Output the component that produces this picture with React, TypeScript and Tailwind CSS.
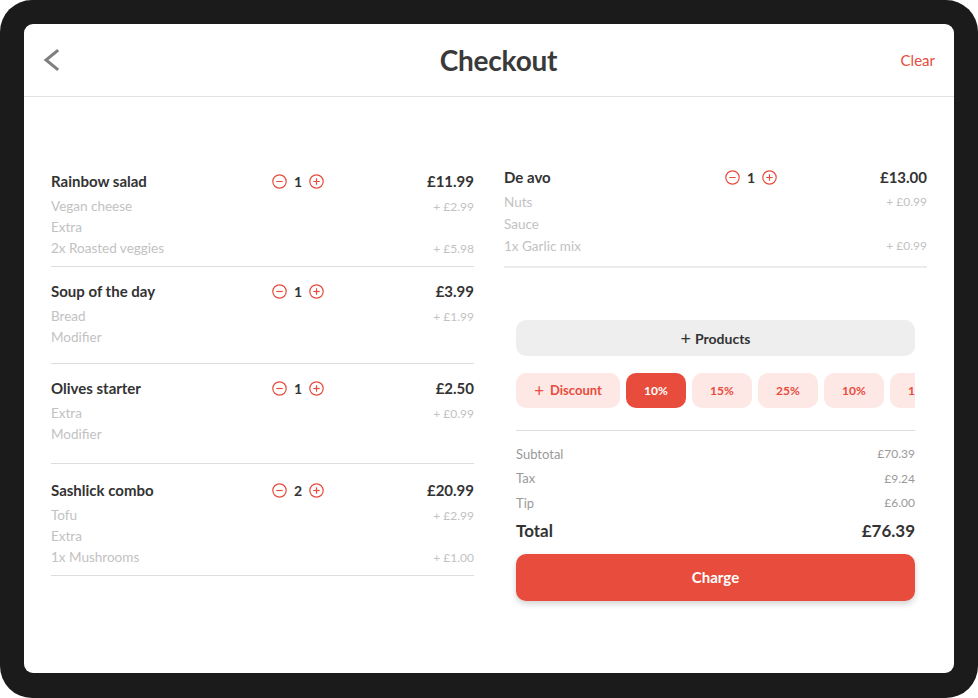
import React from 'react'

interface Modifier { label: string; price?: string }
interface Item { name: string; qty: number; price: string; mods: Modifier[]; pad: string }

const leftItems: Item[] = [
  { name: 'Rainbow salad', qty: 1, price: '£11.99', pad: 'pt-0 pb-[7px]', mods: [
    { label: 'Vegan cheese', price: '+ £2.99' }, { label: 'Extra' }, { label: '2x Roasted veggies', price: '+ £5.98' },
  ] },
  { name: 'Soup of the day', qty: 1, price: '£3.99', pad: 'pt-[14px] pb-[15px]', mods: [
    { label: 'Bread', price: '+ £1.99' }, { label: 'Modifier' },
  ] },
  { name: 'Olives starter', qty: 1, price: '£2.50', pad: 'pt-[14px] pb-[18px]', mods: [
    { label: 'Extra', price: '+ £0.99' }, { label: 'Modifier' },
  ] },
  { name: 'Sashlick combo', qty: 2, price: '£20.99', pad: 'pt-[16px] pb-[7px]', mods: [
    { label: 'Tofu', price: '+ £2.99' }, { label: 'Extra' }, { label: '1x Mushrooms', price: '+ £1.00' },
  ] },
]

const chips = ['10%', '15%', '25%', '10%', '10%']

function CircleBtn({ plus }: { plus?: boolean }) {
  return (
    <svg width="15" height="15" viewBox="0 0 15 15" fill="none" stroke="#e74c3c" strokeWidth="1.2">
      <circle cx="7.5" cy="7.5" r="6.7" />
      <line x1="4.3" y1="7.5" x2="10.7" y2="7.5" />
      {plus && <line x1="7.5" y1="4.3" x2="7.5" y2="10.7" />}
    </svg>
  )
}

function Qty({ n }: { n: number }) {
  return (
    <div className="flex items-center gap-[6px]">
      <CircleBtn />
      <span className="w-[10px] text-center text-[14px] font-bold text-[#333]">{n}</span>
      <CircleBtn plus />
    </div>
  )
}

function ItemRow({ item }: { item: Item }) {
  return (
    <div className={item.pad}>
      <div className="flex items-center h-[20px]">
        <span className="w-[221px] text-[15px] font-bold text-[#333]">{item.name}</span>
        <Qty n={item.qty} />
        <span className="flex-1 text-right text-[15px] font-bold text-[#333]">{item.price}</span>
      </div>
      <div className="mt-[5px]">
        {item.mods.map((m, i) => (
          <div key={i} className="flex justify-between items-center h-[21px] text-[13.5px] text-[#c2c2c2]">
            <span>{m.label}</span>
            {m.price && <span className="text-[12px]">{m.price}</span>}
          </div>
        ))}
      </div>
    </div>
  )
}

export default function App() {
  return (
    <div className="w-[978px] h-[698px] bg-white" style={{ fontFamily: 'Lato, "Open Sans", sans-serif' }}>
      <div className="w-full h-full bg-[#1b1b1b] rounded-[32px] pt-[24px] pl-[24px] pr-[24px] pb-[25px]">
        <div className="w-full h-full bg-white rounded-[9px] overflow-hidden flex flex-col">
          {/* Header */}
          <div className="h-[73px] shrink-0 border-b border-[#e2e2e2] grid grid-cols-[1fr_auto_1fr] items-center pl-[18px] pr-[19px]">
            <svg width="20" height="24" viewBox="0 0 20 24" fill="none" stroke="#7f7f7f" strokeWidth="3" strokeLinecap="square">
              <polyline points="15,3 4,12 15,21" />
            </svg>
            <h1 className="text-[28px] font-bold text-[#3a3a3a] tracking-[-0.2px] pl-[20px]">Checkout</h1>
            <button className="justify-self-end text-[15px] text-[#e74c3c]">Clear</button>
          </div>

          <div className="grid grid-cols-2 gap-[30px] px-[27px]">
            {/* Left column */}
            <div className="pt-[74px]">
              {leftItems.map((item, i) => (
                <div key={i} className="border-b border-[#dedede]">
                  <ItemRow item={item} />
                </div>
              ))}
            </div>

            {/* Right column */}
            <div className="pt-[70px]">
              <div className="border-b-2 border-[#ececec] pb-[9px]">
                <div className="flex items-center h-[20px]">
                  <span className="w-[221px] text-[15px] font-bold text-[#333]">De avo</span>
                  <Qty n={1} />
                  <span className="flex-1 text-right text-[15px] font-bold text-[#333]">£13.00</span>
                </div>
                <div className="mt-[4px]">
                  {[{ l: 'Nuts', p: '+ £0.99' }, { l: 'Sauce', p: '' }, { l: '1x Garlic mix', p: '+ £0.99' }].map((m, i) => (
                    <div key={i} className="flex justify-between items-center h-[22px] text-[13.5px] text-[#c2c2c2]">
                      <span>{m.l}</span>
                      {m.p && <span className="text-[12px]">{m.p}</span>}
                    </div>
                  ))}
                </div>
              </div>

              <div className="px-[12px] pt-[52px]">
                <button className="w-full h-[36px] rounded-[10px] bg-[#eeeeee] text-[14px] font-bold text-[#333] flex items-center justify-center gap-[4px]">
                  <span className="text-[18px] font-normal leading-none">+</span> Products
                </button>

                <div className="mt-[17px] flex gap-[6px] overflow-hidden">
                  <button className="shrink-0 w-[104px] h-[35px] rounded-[10px] bg-[#fde8e6] text-[13px] font-bold text-[#e74c3c] flex items-center justify-center gap-[6px]">
                    <span className="text-[17px] font-normal leading-none">+</span> Discount
                  </button>
                  {chips.map((c, i) => (
                    <button
                      key={i}
                      className={`shrink-0 w-[60px] h-[35px] rounded-[10px] text-[12px] font-bold ${i === 0 ? 'bg-[#e74c3c] text-white' : 'bg-[#fde8e6] text-[#e74c3c]'}`}
                    >
                      {c}
                    </button>
                  ))}
                </div>

                <div className="mt-[22px] border-t border-[#dcdcdc] pt-[11px]">
                  {[['Subtotal', '£70.39'], ['Tax', '£9.24'], ['Tip', '£6.00']].map(([l, v]) => (
                    <div key={l} className="flex justify-between items-center h-[24.5px] text-[13px] text-[#9a9a9a]">
                      <span>{l}</span>
                      <span className="text-[12px]">{v}</span>
                    </div>
                  ))}
                  <div className="flex justify-between items-center h-[31px] text-[17px] font-bold text-[#333]">
                    <span>Total</span>
                    <span>£76.39</span>
                  </div>
                  <button className="mt-[7px] w-full h-[47px] rounded-[10px] bg-[#e74c3c] text-white text-[15px] font-bold shadow-[0_3px_6px_rgba(0,0,0,0.18)]">
                    Charge
                  </button>
                </div>
              </div>
            </div>
          </div>
        </div>
      </div>
    </div>
  )
}
